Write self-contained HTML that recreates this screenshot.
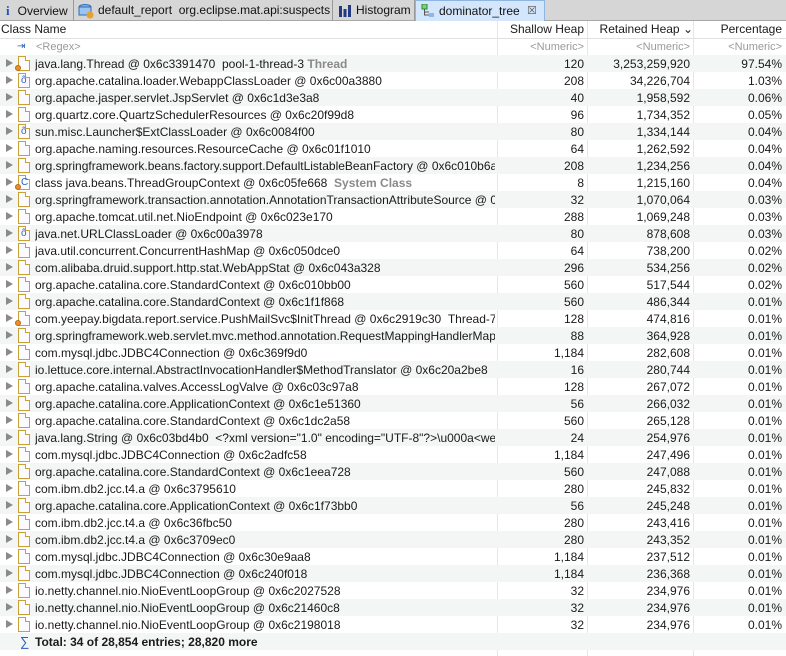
<!DOCTYPE html><html><head><style>
*{margin:0;padding:0;box-sizing:border-box}
body{width:786px;height:656px;overflow:hidden;background:#fff;font-family:"Liberation Sans",sans-serif;font-size:12px;color:#1a1a1a;position:relative}
.tabs{position:absolute;left:0;top:0;width:786px;height:21px;background:#d6d6d6;border-bottom:1px solid #a8a8a8}
.tab{position:absolute;top:0;height:21px;border-right:1px solid #9a9a9a;line-height:21px;font-size:12px;color:#111;white-space:nowrap;overflow:hidden}
.tab.act{background:#d3e6fb;border:1px solid #8fb4df;border-bottom:none}
.hdr{position:absolute;top:21px;left:0;width:786px;height:17px;line-height:17px;font-size:12px}
.row{position:absolute;left:0;width:786px;height:17px;line-height:18px;white-space:nowrap}
.g{background:#f4f5f5}
.c{position:absolute;top:0;overflow:hidden}
.n{left:35px;width:460px}
.s{left:497px;width:87px;text-align:right}
.r{left:588px;width:102px;text-align:right}
.p{left:694px;width:88px;text-align:right}
.tri{position:absolute;left:6px;top:4px;width:0;height:0;border-left:7px solid #8a8a8a;border-top:4.5px solid transparent;border-bottom:4.5px solid transparent}
.ic{position:absolute;left:18px;top:1px;width:12px;height:15px;border:1px solid #c9a033;background:#fbfbff}
.ic:after{content:"";position:absolute;right:-1px;top:-1px;width:4px;height:4px;background:#fff;border-left:1px solid #c9a033;border-bottom:1px solid #c9a033}
.dot{position:absolute;left:15px;top:10px;width:6px;height:6px;border-radius:50%;background:#e8912a;border:1px solid #b86a10}
.cl{position:absolute;left:21px;top:3px;font-size:10px;color:#2c5fb8;line-height:11px}
.vl{position:absolute;top:21px;height:635px;width:1px;background:#e6e6e6}
.gr{color:#8a8a8a;font-weight:bold}
</style></head><body>
<div class="tabs">
<div class="tab" style="left:0;width:74px"><span style="color:#2355b0;font-weight:bold;font-family:'Liberation Serif',serif;margin-left:6px;font-size:13px">i</span><span style="margin-left:8px">Overview</span></div>
<div class="tab" style="left:74px;width:259px"><svg style="position:absolute;left:4px;top:3px" width="16" height="16"><ellipse cx="7" cy="4" rx="6" ry="2.5" fill="#7fb2e8" stroke="#2f6cb8"/><rect x="1" y="4" width="12" height="8" fill="#9cc4ee" stroke="#2f6cb8"/><circle cx="12" cy="12" r="3.5" fill="#e8a030"/></svg><span style="position:absolute;left:24px">default_report &nbsp;org.eclipse.mat.api:suspects</span></div>
<div class="tab" style="left:333px;width:82px"><svg style="position:absolute;left:6px;top:5px" width="12" height="12"><rect x="0" y="1" width="3" height="11" fill="#233a80"/><rect x="4.5" y="4" width="3" height="8" fill="#233a80"/><rect x="9" y="0" width="3" height="12" fill="#233a80"/></svg><span style="position:absolute;left:23px">Histogram</span></div>
<div class="tab act" style="left:415px;width:130px"><svg style="position:absolute;left:5px;top:3px" width="14" height="14"><rect x="1" y="0" width="5" height="5" fill="#7dd07d" stroke="#2e8a2e"/><path d="M3.5 5V11H8M3.5 8H8" stroke="#555" fill="none"/><rect x="8" y="9" width="5" height="4" fill="#8ab8ea"/></svg><span style="position:absolute;left:23px">dominator_tree</span><span style="position:absolute;left:111px;color:#555;font-size:11px">☒</span></div>
</div>
<div class="hdr"><span style="position:absolute;left:1px">Class Name</span><span style="position:absolute;left:497px;width:87px;text-align:right">Shallow Heap</span><span style="position:absolute;left:588px;width:105px;text-align:right">Retained Heap ⌄</span><span style="position:absolute;left:694px;width:88px;text-align:right">Percentage</span></div>
<div style="position:absolute;top:38px;left:0;width:786px;height:1px;background:#e0e0e0"></div>
<div class="vl" style="left:497px"></div><div class="vl" style="left:587px"></div><div class="vl" style="left:693px"></div>
<div class="row" style="top:38px;color:#9a9a9a;font-size:11px"><span style="position:absolute;left:17px;color:#2c5fb8;font-size:10px">⇥</span><span class="c n" style="left:36px">&lt;Regex&gt;</span><span class="c s">&lt;Numeric&gt;</span><span class="c r">&lt;Numeric&gt;</span><span class="c p">&lt;Numeric&gt;</span></div>

<div class="row g" style="top:55px"><i class="tri"></i><i class="ic"></i><i class="dot"></i><span class="c n">java.lang.Thread @ 0x6c3391470 &nbsp;pool-1-thread-3 <span class="gr">Thread</span></span><span class="c s">120</span><span class="c r">3,253,259,920</span><span class="c p">97.54%</span></div>
<div class="row" style="top:72px"><i class="tri"></i><i class="ic"></i><span class="cl">ô</span><span class="c n">org.apache.catalina.loader.WebappClassLoader @ 0x6c00a3880</span><span class="c s">208</span><span class="c r">34,226,704</span><span class="c p">1.03%</span></div>
<div class="row g" style="top:89px"><i class="tri"></i><i class="ic"></i><span class="c n">org.apache.jasper.servlet.JspServlet @ 0x6c1d3e3a8</span><span class="c s">40</span><span class="c r">1,958,592</span><span class="c p">0.06%</span></div>
<div class="row" style="top:106px"><i class="tri"></i><i class="ic"></i><span class="c n">org.quartz.core.QuartzSchedulerResources @ 0x6c20f99d8</span><span class="c s">96</span><span class="c r">1,734,352</span><span class="c p">0.05%</span></div>
<div class="row g" style="top:123px"><i class="tri"></i><i class="ic"></i><span class="cl">ô</span><span class="c n">sun.misc.Launcher$ExtClassLoader @ 0x6c0084f00</span><span class="c s">80</span><span class="c r">1,334,144</span><span class="c p">0.04%</span></div>
<div class="row" style="top:140px"><i class="tri"></i><i class="ic"></i><span class="c n">org.apache.naming.resources.ResourceCache @ 0x6c01f1010</span><span class="c s">64</span><span class="c r">1,262,592</span><span class="c p">0.04%</span></div>
<div class="row g" style="top:157px"><i class="tri"></i><i class="ic"></i><span class="c n">org.springframework.beans.factory.support.DefaultListableBeanFactory @ 0x6c010b6a8</span><span class="c s">208</span><span class="c r">1,234,256</span><span class="c p">0.04%</span></div>
<div class="row" style="top:174px"><i class="tri"></i><i class="ic"></i><span class="cl">C</span><i class="dot"></i><span class="c n">class java.beans.ThreadGroupContext @ 0x6c05fe668 &nbsp;<span class="gr">System Class</span></span><span class="c s">8</span><span class="c r">1,215,160</span><span class="c p">0.04%</span></div>
<div class="row g" style="top:191px"><i class="tri"></i><i class="ic"></i><span class="c n">org.springframework.transaction.annotation.AnnotationTransactionAttributeSource @ 0x6</span><span class="c s">32</span><span class="c r">1,070,064</span><span class="c p">0.03%</span></div>
<div class="row" style="top:208px"><i class="tri"></i><i class="ic"></i><span class="c n">org.apache.tomcat.util.net.NioEndpoint @ 0x6c023e170</span><span class="c s">288</span><span class="c r">1,069,248</span><span class="c p">0.03%</span></div>
<div class="row g" style="top:225px"><i class="tri"></i><i class="ic"></i><span class="cl">ô</span><span class="c n">java.net.URLClassLoader @ 0x6c00a3978</span><span class="c s">80</span><span class="c r">878,608</span><span class="c p">0.03%</span></div>
<div class="row" style="top:242px"><i class="tri"></i><i class="ic"></i><span class="c n">java.util.concurrent.ConcurrentHashMap @ 0x6c050dce0</span><span class="c s">64</span><span class="c r">738,200</span><span class="c p">0.02%</span></div>
<div class="row g" style="top:259px"><i class="tri"></i><i class="ic"></i><span class="c n">com.alibaba.druid.support.http.stat.WebAppStat @ 0x6c043a328</span><span class="c s">296</span><span class="c r">534,256</span><span class="c p">0.02%</span></div>
<div class="row" style="top:276px"><i class="tri"></i><i class="ic"></i><span class="c n">org.apache.catalina.core.StandardContext @ 0x6c010bb00</span><span class="c s">560</span><span class="c r">517,544</span><span class="c p">0.02%</span></div>
<div class="row g" style="top:293px"><i class="tri"></i><i class="ic"></i><span class="c n">org.apache.catalina.core.StandardContext @ 0x6c1f1f868</span><span class="c s">560</span><span class="c r">486,344</span><span class="c p">0.01%</span></div>
<div class="row" style="top:310px"><i class="tri"></i><i class="ic"></i><i class="dot"></i><span class="c n">com.yeepay.bigdata.report.service.PushMailSvc$InitThread @ 0x6c2919c30 &nbsp;Thread-7</span><span class="c s">128</span><span class="c r">474,816</span><span class="c p">0.01%</span></div>
<div class="row g" style="top:327px"><i class="tri"></i><i class="ic"></i><span class="c n">org.springframework.web.servlet.mvc.method.annotation.RequestMappingHandlerMapp</span><span class="c s">88</span><span class="c r">364,928</span><span class="c p">0.01%</span></div>
<div class="row" style="top:344px"><i class="tri"></i><i class="ic"></i><span class="c n">com.mysql.jdbc.JDBC4Connection @ 0x6c369f9d0</span><span class="c s">1,184</span><span class="c r">282,608</span><span class="c p">0.01%</span></div>
<div class="row g" style="top:361px"><i class="tri"></i><i class="ic"></i><span class="c n">io.lettuce.core.internal.AbstractInvocationHandler$MethodTranslator @ 0x6c20a2be8</span><span class="c s">16</span><span class="c r">280,744</span><span class="c p">0.01%</span></div>
<div class="row" style="top:378px"><i class="tri"></i><i class="ic"></i><span class="c n">org.apache.catalina.valves.AccessLogValve @ 0x6c03c97a8</span><span class="c s">128</span><span class="c r">267,072</span><span class="c p">0.01%</span></div>
<div class="row g" style="top:395px"><i class="tri"></i><i class="ic"></i><span class="c n">org.apache.catalina.core.ApplicationContext @ 0x6c1e51360</span><span class="c s">56</span><span class="c r">266,032</span><span class="c p">0.01%</span></div>
<div class="row" style="top:412px"><i class="tri"></i><i class="ic"></i><span class="c n">org.apache.catalina.core.StandardContext @ 0x6c1dc2a58</span><span class="c s">560</span><span class="c r">265,128</span><span class="c p">0.01%</span></div>
<div class="row g" style="top:429px"><i class="tri"></i><i class="ic"></i><span class="c n">java.lang.String @ 0x6c03bd4b0 &nbsp;&lt;?xml version="1.0" encoding="UTF-8"?&gt;\u000a&lt;we</span><span class="c s">24</span><span class="c r">254,976</span><span class="c p">0.01%</span></div>
<div class="row" style="top:446px"><i class="tri"></i><i class="ic"></i><span class="c n">com.mysql.jdbc.JDBC4Connection @ 0x6c2adfc58</span><span class="c s">1,184</span><span class="c r">247,496</span><span class="c p">0.01%</span></div>
<div class="row g" style="top:463px"><i class="tri"></i><i class="ic"></i><span class="c n">org.apache.catalina.core.StandardContext @ 0x6c1eea728</span><span class="c s">560</span><span class="c r">247,088</span><span class="c p">0.01%</span></div>
<div class="row" style="top:480px"><i class="tri"></i><i class="ic"></i><span class="c n">com.ibm.db2.jcc.t4.a @ 0x6c3795610</span><span class="c s">280</span><span class="c r">245,832</span><span class="c p">0.01%</span></div>
<div class="row g" style="top:497px"><i class="tri"></i><i class="ic"></i><span class="c n">org.apache.catalina.core.ApplicationContext @ 0x6c1f73bb0</span><span class="c s">56</span><span class="c r">245,248</span><span class="c p">0.01%</span></div>
<div class="row" style="top:514px"><i class="tri"></i><i class="ic"></i><span class="c n">com.ibm.db2.jcc.t4.a @ 0x6c36fbc50</span><span class="c s">280</span><span class="c r">243,416</span><span class="c p">0.01%</span></div>
<div class="row g" style="top:531px"><i class="tri"></i><i class="ic"></i><span class="c n">com.ibm.db2.jcc.t4.a @ 0x6c3709ec0</span><span class="c s">280</span><span class="c r">243,352</span><span class="c p">0.01%</span></div>
<div class="row" style="top:548px"><i class="tri"></i><i class="ic"></i><span class="c n">com.mysql.jdbc.JDBC4Connection @ 0x6c30e9aa8</span><span class="c s">1,184</span><span class="c r">237,512</span><span class="c p">0.01%</span></div>
<div class="row g" style="top:565px"><i class="tri"></i><i class="ic"></i><span class="c n">com.mysql.jdbc.JDBC4Connection @ 0x6c240f018</span><span class="c s">1,184</span><span class="c r">236,368</span><span class="c p">0.01%</span></div>
<div class="row" style="top:582px"><i class="tri"></i><i class="ic"></i><span class="c n">io.netty.channel.nio.NioEventLoopGroup @ 0x6c2027528</span><span class="c s">32</span><span class="c r">234,976</span><span class="c p">0.01%</span></div>
<div class="row g" style="top:599px"><i class="tri"></i><i class="ic"></i><span class="c n">io.netty.channel.nio.NioEventLoopGroup @ 0x6c21460c8</span><span class="c s">32</span><span class="c r">234,976</span><span class="c p">0.01%</span></div>
<div class="row" style="top:616px"><i class="tri"></i><i class="ic"></i><span class="c n">io.netty.channel.nio.NioEventLoopGroup @ 0x6c2198018</span><span class="c s">32</span><span class="c r">234,976</span><span class="c p">0.01%</span></div>
<div class="row g" style="top:633px"><span style="position:absolute;left:20px;color:#2c5fb8;font-size:13px">∑</span><span class="c n" style="font-weight:bold">Total: 34 of 28,854 entries; 28,820 more</span></div>
</body></html>
